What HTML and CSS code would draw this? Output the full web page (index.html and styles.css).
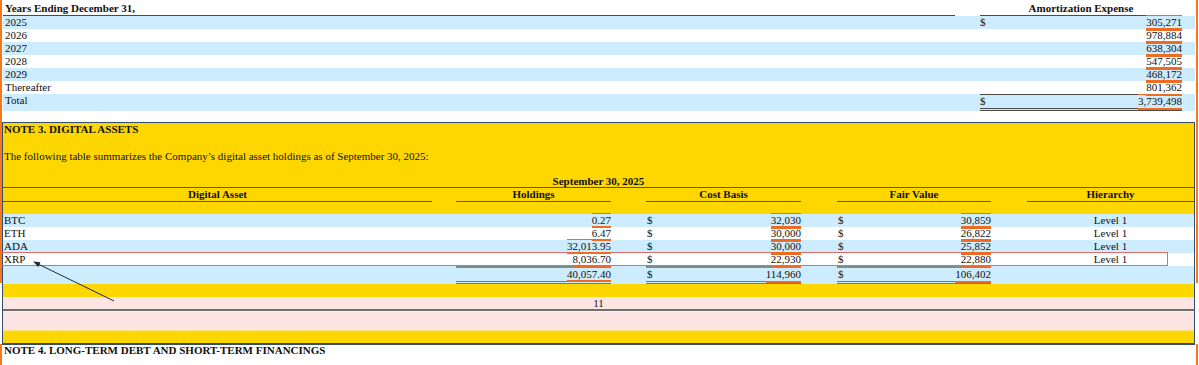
FILE: index.html
```html
<!DOCTYPE html>
<html lang="en">
<head>
<meta charset="utf-8">
<title>Digital Assets</title>
<link rel="stylesheet" href="styles.css">
</head>
<body>
<div class="doc">
  <section class="amort">
    <div class="arow head">
      <div class="a-label">Years Ending December 31,</div><div></div>
      <div class="a-amt a-head">Amortization Expense</div><div></div>
    </div>
    <div class="arow blue">
      <div class="a-label">2025</div><div></div>
      <div class="a-amt"><span>$</span><span class="hl">305,271</span></div><div></div>
    </div>
    <div class="arow">
      <div class="a-label">2026</div><div></div>
      <div class="a-amt"><span></span><span class="hl">978,884</span></div><div></div>
    </div>
    <div class="arow blue">
      <div class="a-label">2027</div><div></div>
      <div class="a-amt"><span></span><span class="hl">638,304</span></div><div></div>
    </div>
    <div class="arow">
      <div class="a-label">2028</div><div></div>
      <div class="a-amt"><span></span><span class="hl">547,505</span></div><div></div>
    </div>
    <div class="arow blue">
      <div class="a-label">2029</div><div></div>
      <div class="a-amt"><span></span><span class="hl">468,172</span></div><div></div>
    </div>
    <div class="arow">
      <div class="a-label">Thereafter</div><div></div>
      <div class="a-amt"><span></span><span class="hl">801,362</span></div><div></div>
    </div>
    <div class="arow blue">
      <div class="a-label">Total</div><div></div>
      <div class="a-amt a-total"><span>$</span><span class="hl">3,739,498</span></div><div></div>
    </div>
  </section>

  <section class="note">
    <div class="note-title">NOTE 3. DIGITAL ASSETS</div>
    <div class="note-text">The following table summarizes the Company’s digital asset holdings as of September 30, 2025:</div>
    <div class="period">September 30, 2025</div>
    <div class="drow dhead">
      <div class="h-cell">Digital Asset</div><div class="h-gap"></div>
      <div class="h-cell">Holdings</div><div class="h-gap"></div>
      <div class="h-cell">Cost Basis</div><div class="h-gap"></div>
      <div class="h-cell">Fair Value</div><div class="h-gap"></div>
      <div class="h-cell">Hierarchy</div>
    </div>
    <div class="dspacer"></div>
    <div class="drow blue">
      <div class="d-asset">BTC</div><div></div>
      <div class="d-num"><span class="hl">0.27</span></div><div></div>
      <div class="d-cur"><span>$</span><span class="hl">32,030</span></div><div></div>
      <div class="d-cur"><span>$</span><span class="hl">30,859</span></div><div></div>
      <div class="d-lvl">Level 1</div>
    </div>
    <div class="drow white">
      <div class="d-asset">ETH</div><div></div>
      <div class="d-num"><span class="hl">6.47</span></div><div></div>
      <div class="d-cur"><span>$</span><span class="hl">30,000</span></div><div></div>
      <div class="d-cur"><span>$</span><span class="hl">26,822</span></div><div></div>
      <div class="d-lvl">Level 1</div>
    </div>
    <div class="drow blue">
      <div class="d-asset">ADA</div><div></div>
      <div class="d-num"><span class="hl">32,013.95</span></div><div></div>
      <div class="d-cur"><span>$</span><span class="hl">30,000</span></div><div></div>
      <div class="d-cur"><span>$</span><span class="hl">25,852</span></div><div></div>
      <div class="d-lvl">Level 1</div>
    </div>
    <div class="drow white xrp">
      <div class="d-asset">XRP</div><div></div>
      <div class="d-num"><span class="hl">8,036.70</span></div><div></div>
      <div class="d-cur"><span>$</span><span class="hl">22,930</span></div><div></div>
      <div class="d-cur"><span>$</span><span class="hl">22,880</span></div><div></div>
      <div class="d-lvl">Level 1</div>
    </div>
    <div class="drow blue dtotal">
      <div class="d-asset"></div><div></div>
      <div class="d-num t"><span class="hl">40,057.40</span></div><div></div>
      <div class="d-cur t"><span>$</span><span class="hl">114,960</span></div><div></div>
      <div class="d-cur t"><span>$</span><span class="hl">106,402</span></div><div></div>
      <div class="d-lvl"></div>
    </div>
    <div class="pgbreak">
      <div class="pb-yellow"></div>
      <div class="pb-num">11</div>
      <div class="pb-pink"></div>
      <div class="pb-yellow pb-last"></div>
    </div>
  </section>

  <div class="note4">NOTE 4. LONG-TERM DEBT AND SHORT-TERM FINANCINGS</div>

  <div class="edge edge-l edge-top"></div>
  <div class="edge edge-r edge-top"></div>
  <div class="edge edge-l edge-bot"></div>
  <div class="edge edge-r edge-bot"></div>

  <svg class="arrow" width="92" height="50" viewBox="0 0 92 50" aria-hidden="true">
    <line x1="86" y1="45" x2="9" y2="7.5" stroke="#1c2a44" stroke-width="1"/>
    <polygon points="5,5.5 12.5,6.2 10.3,10.9" fill="#1c2a44"/>
  </svg>
</div>
</body>
</html>
```

FILE: styles.css
```css
html, body {
  margin: 0;
  padding: 0;
  background: #ffffff;
}

body {
  font-family: "Liberation Serif", "Times New Roman", serif;
  font-size: 11px;
  color: #111;
}

.doc {
  position: relative;
  width: 1199px;
  height: 365px;
  overflow: hidden;
}

/* ---------- amortization table ---------- */
.amort {
  margin-left: 3px;
  width: 1192px;
}

.arow {
  display: grid;
  grid-template-columns: 952px 25px 202px 13px;
  line-height: 13px;
}

.blue {
  background: #cdecfd;
}

.white {
  background: #ffffff;
}

.arow.head {
  padding-top: 2px;
  font-weight: bold;
}

.arow.head .a-label,
.arow.head .a-amt {
  border-bottom: 1px solid #4a4a4a;
}

.a-label {
  padding-left: 2px;
}

.a-amt {
  display: flex;
  justify-content: space-between;
}

.a-amt.a-head {
  display: block;
  text-align: center;
}

.a-total {
  border-top: 1px solid #4a4a4a;
  border-bottom: 3px double #4a4a4a;
}

.hl {
  position: relative;
  z-index: 1;
  box-shadow: 0 -1px 0 #f06a22, 0 2px 0 #f06a22;
}

/* ---------- note 3 box ---------- */
.note {
  position: relative;
  margin: 11px 0 0 2px;
  width: 1193px;
  box-sizing: border-box;
  border: 1px solid #31506f;
  border-bottom-width: 2px;
  background: #ffd700;
}

.note-title {
  font-weight: bold;
  line-height: 13px;
  padding-left: 1px;
}

.note-text {
  margin-top: 14px;
  line-height: 13px;
  padding-left: 1px;
}

.period {
  margin-top: 12px;
  line-height: 12px;
  font-weight: bold;
  text-align: center;
}

.drow {
  display: grid;
  grid-template-columns: 429px 24px 155px 35px 155px 36px 154px 36px 1fr;
  line-height: 13px;
}

.dhead {
  font-weight: bold;
  text-align: center;
  border-top: 1px solid #6a5a00;
}

.h-cell {
  border-bottom: 1px solid #6a5a00;
}

.dspacer {
  height: 12px;
}

.d-asset {
  padding-left: 1px;
}

.d-num {
  text-align: right;
}

.d-cur {
  display: flex;
  justify-content: space-between;
  padding-left: 1px;
}

.d-lvl {
  text-align: center;
}

.xrp {
  position: relative;
}

.xrp::after {
  content: "";
  position: absolute;
  left: -3px;
  top: -1px;
  width: 1168px;
  height: 14px;
  box-sizing: border-box;
  border: 1px solid #e46a6a;
}

.t {
  border-top: 2px solid #7d8c8c;
  border-bottom: 3px double #6d7b7b;
}

/* ---------- page break ---------- */
.pb-yellow {
  height: 13px;
}

.pb-num {
  height: 12px;
  line-height: 12px;
  text-align: center;
  background: #ffe4e4;
  border-bottom: 2px solid #6f6f6f;
}

.pb-pink {
  height: 19px;
  background: #ffe4e4;
  border-top: 1px solid #fff0f0;
  box-sizing: border-box;
}

.pb-last {
  border-top: 1px solid #ffe680;
  box-sizing: border-box;
}

/* ---------- note 4 ---------- */
.note4 {
  font-weight: bold;
  line-height: 10px;
  padding-left: 4px;
}

/* ---------- overlays ---------- */
.edge {
  position: absolute;
  width: 2px;
  background: #f3781f;
}

.edge-l { left: 0; }
.edge-r { left: 1196px; }
.edge-top { top: 0; height: 283px; }
.edge-bot { top: 344px; height: 21px; }

.arrow {
  position: absolute;
  left: 28px;
  top: 256px;
}
```
